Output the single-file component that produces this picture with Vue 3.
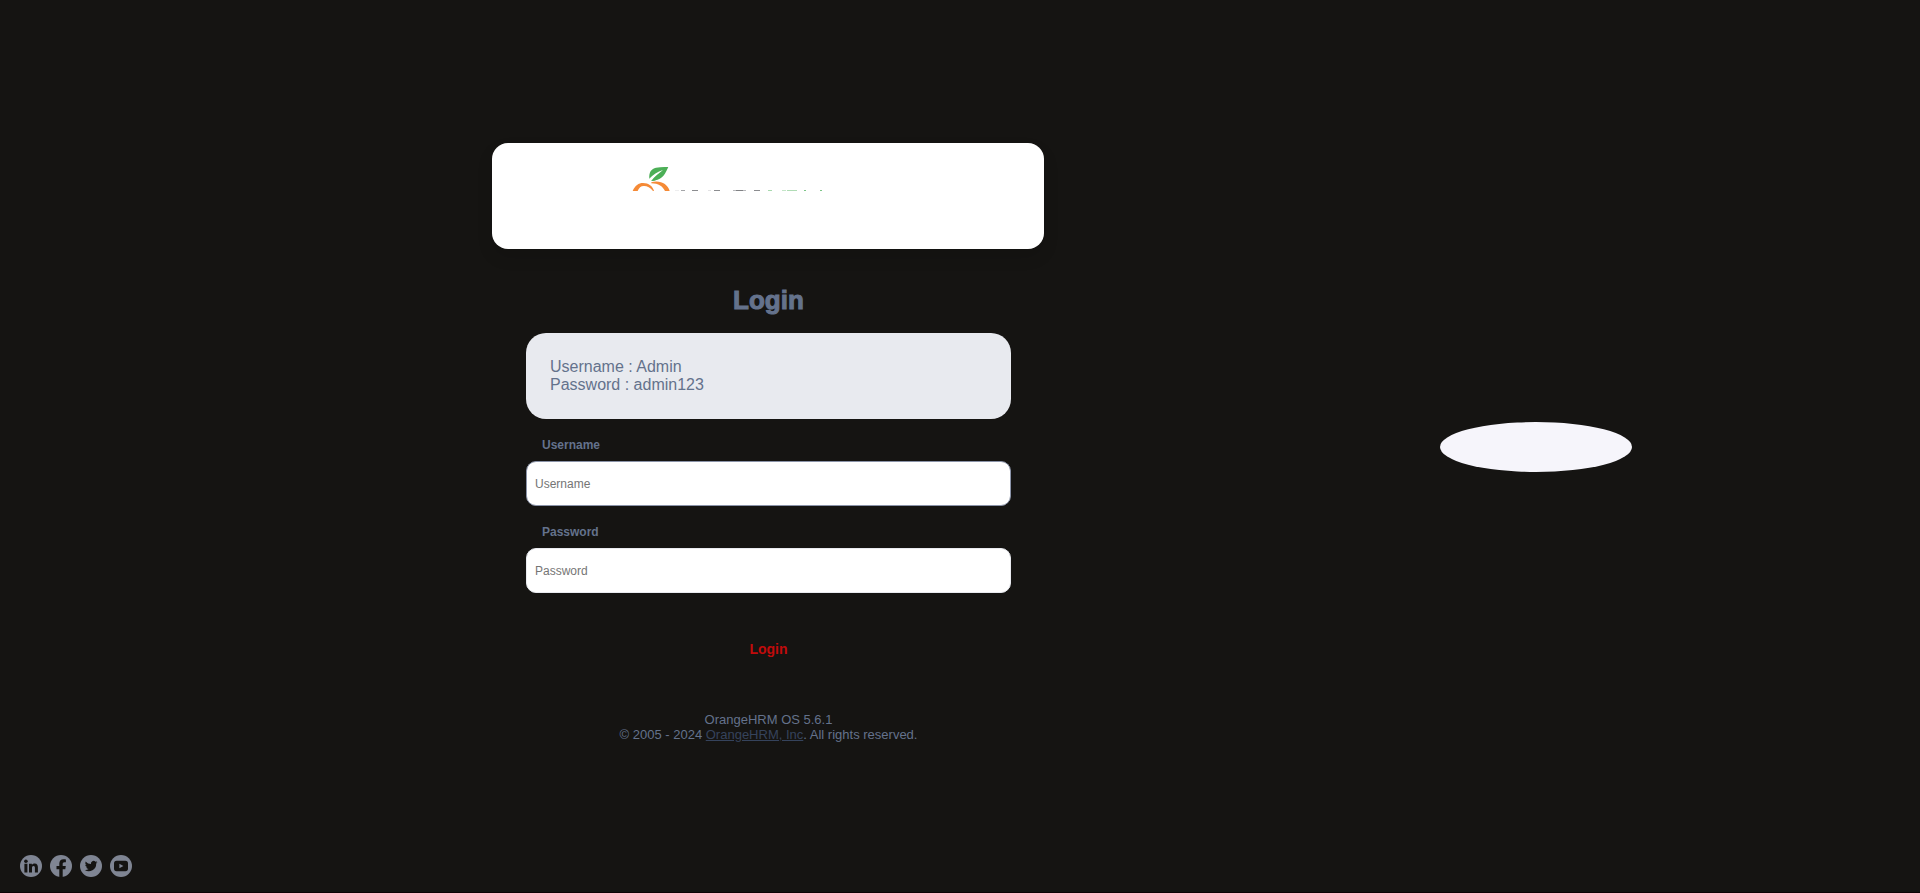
<script setup>
import { ref } from 'vue'

const username = ref('')
const password = ref('')

const logoTicks = [
  { x: 43, w: 4, fill: '#ededee' },
  { x: 49, w: 4, fill: '#a4a5a8' },
  { x: 60, w: 6, fill: '#8c8d90' },
  { x: 76, w: 3, fill: '#e2e2e4' },
  { x: 82, w: 6, fill: '#8c8d90' },
  { x: 101, w: 3, fill: '#b9babd' },
  { x: 104, w: 7, fill: '#808184' },
  { x: 111, w: 3, fill: '#b9babd' },
  { x: 122, w: 6, fill: '#8c8d90' },
  { x: 136, w: 4, fill: '#a8d9ae' },
  { x: 150, w: 4, fill: '#c5e6c9' },
  { x: 155, w: 10, fill: '#b0dcb5' },
  { x: 172, w: 2, fill: '#7cc587' },
  { x: 188, w: 2, fill: '#7cc587' }
]
</script>

<template>
  <div class="page">
    <main class="login-pane">
      <div class="column">
        <div class="brand">
          <svg class="logo" viewBox="0 0 272 25" role="img" aria-label="OrangeHRM">
            <path d="M17.3 12.5C16.8 6 19.5 2.9 24 1.8 28 .9 32 1.1 36.3 1.1 35.2 3.4 34.4 5.3 33.2 7.3 29.8 13.2 25.5 14 19.2 15.1Z" fill="#4caf57" />
            <path d="M17 13C21 8.5 25.5 6 31 4 26.8 7.3 23 10 19 15.3L16.5 15Z" fill="#fff" />
            <path d="M19.4 15C22.5 11.5 24.5 9.5 27.5 7.5L29 11 23 14.6Z" fill="#4caf57" />
            <path d="M.7 25C3 19.4 6.6 17 11 17 16.6 17 20.8 20.2 22 25H21C18.3 21.4 15 19.8 11.8 19.9 8.8 20 7 21.6 5.6 25Z" fill="#f58a36" />
            <path d="M19.3 16.2C28.5 14 35.5 17.8 37.7 25H33C31 20.5 26.5 17.2 19.3 17.2Z" fill="#f58a36" />
            <rect v-for="t in logoTicks" :key="t.x" :x="t.x" y="24" :width="t.w" height="1" :fill="t.fill" />
          </svg>
        </div>

        <div class="body">
          <h1>Login</h1>

          <div class="hint">
            <p>Username : Admin</p>
            <p>Password : admin123</p>
          </div>

          <form @submit.prevent>
            <label for="username">Username</label>
            <input id="username" v-model="username" class="active" type="text" placeholder="Username" />
            <label for="password">Password</label>
            <input id="password" v-model="password" type="password" placeholder="Password" />
            <button type="submit">Login</button>
          </form>

          <footer>
            <p>OrangeHRM OS 5.6.1</p>
            <p>© 2005 - 2024 <a href="#">OrangeHRM, Inc</a>. All rights reserved.</p>
          </footer>
        </div>
      </div>
    </main>

    <div class="blob"></div>

    <nav class="social" aria-label="Social media">
      <a href="#" aria-label="LinkedIn">
        <svg viewBox="0 0 22 22">
          <circle cx="11" cy="11" r="11" fill="#7f8593" />
          <g fill="#151412">
            <circle cx="5.9" cy="6.2" r="1.8" />
            <path d="M4.4 8.8h3v8.6h-3zM9 8.8h2.9V10c.5-.8 1.5-1.4 2.7-1.4 2.7 0 3.3 1.8 3.3 4v4.8h-3v-4.2c0-1 0-2.1-1.4-2.1S12 12.2 12 13.2v4.2H9z" />
          </g>
        </svg>
      </a>
      <a href="#" aria-label="Facebook">
        <svg viewBox="0 0 22 22">
          <circle cx="11" cy="11" r="11" fill="#7f8593" />
          <path d="M9.3 22v-7.8H6.5V11h2.8V8.6c0-2.8 1.7-4.3 4.2-4.3 1.2 0 2.4.2 2.4.2v2.7h-1.4c-1.4 0-1.8.8-1.8 1.7V11h3.1l-.5 3.2h-2.6V22z" fill="#151412" />
        </svg>
      </a>
      <a href="#" aria-label="Twitter">
        <svg viewBox="0 0 22 22">
          <circle cx="11" cy="11" r="11" fill="#7f8593" />
          <path transform="translate(4.8 4.7) scale(.53)" d="M23.9 4.6a10 10 0 0 1-2.8.8 5 5 0 0 0 2.2-2.8c-1 .6-2 1-3.2 1.2a4.9 4.9 0 0 0-8.4 4.5A14 14 0 0 1 1.6 3.2a4.9 4.9 0 0 0 1.6 6.5 5 5 0 0 1-2.3-.6c0 2.3 1.6 4.4 4 4.9a5 5 0 0 1-2.3.1 4.9 4.9 0 0 0 4.6 3.4A9.9 9.9 0 0 1 0 19.5 14 14 0 0 0 21.5 7.1a10 10 0 0 0 2.4-2.5z" fill="#151412" />
        </svg>
      </a>
      <a href="#" aria-label="YouTube">
        <svg viewBox="0 0 22 22">
          <circle cx="11" cy="11" r="11" fill="#7f8593" />
          <rect x="4" y="5.8" width="14" height="10.4" rx="2.6" fill="#151412" />
          <path d="M9.4 8.7v4.6l4-2.3z" fill="#7f8593" />
        </svg>
      </a>
    </nav>
  </div>
</template>

<style>
body {
  background: #151412;
}
</style>

<style scoped>
.page {
  position: relative;
  min-height: 100vh;
  box-sizing: border-box;
  display: flex;
  background: #151412;
  box-shadow: inset 0 -1px #0e0306;
  color: #64728c;
  font-family: "Liberation Sans", Arial, sans-serif;
}

.login-pane {
  width: 80%;
  display: flex;
  flex-direction: column;
  align-items: center;
  justify-content: center;
}

.column {
  width: 100%;
  max-width: 552px;
  padding-bottom: 8px;
}

.brand {
  box-sizing: border-box;
  min-height: 106px;
  padding: 23px 140px;
  border-radius: 16px;
  background: #fff;
  box-shadow: 0 8px 16px rgba(0, 0, 0, 0.12);
}

.logo {
  display: block;
  width: 100%;
}

.body {
  padding: 35px 33px 0 34px;
  text-align: center;
}

h1 {
  margin: 0;
  font-size: 26px;
  font-weight: 900;
  line-height: 32px;
  -webkit-text-stroke: 1px currentColor;
}

.hint {
  margin-top: 17px;
  padding: 25px 24px;
  border-radius: 20px;
  background: #e8eaef;
  font-size: 16px;
  line-height: 18px;
  text-align: left;
}

p {
  margin: 0;
}

form {
  display: flex;
  flex-direction: column;
}

label {
  margin-top: 18px;
  padding: 0 16px;
  font-size: 12px;
  font-weight: 700;
  line-height: 16px;
  text-align: left;
}

input {
  box-sizing: border-box;
  width: 100%;
  height: 45px;
  margin: 8px 0 0;
  padding: 0 8px;
  border: 1px solid #e8eaef;
  border-radius: 10px;
  background: #fff;
  color: #64728c;
  font-family: inherit;
  font-size: 12px;
}

input.active {
  border-color: #8a93a8;
}

input::placeholder {
  color: #757575;
}

button {
  height: 40px;
  margin: 36px 0 0;
  padding: 0;
  border: 0;
  background: transparent;
  color: #c10b0b;
  font-family: inherit;
  font-size: 14px;
  font-weight: 700;
}

footer {
  padding: 43px 0 0;
  font-size: 13px;
  line-height: 15px;
}

footer a {
  color: #35435c;
}

.blob {
  position: absolute;
  top: 50%;
  left: 80%;
  width: 10%;
  height: 50px;
  border-radius: 50%;
  background: #f6f5fb;
  transform: translate(-50%, -50%);
}

.social {
  position: absolute;
  left: 20px;
  bottom: 16px;
  display: flex;
  gap: 8px;
}

.social a,
.social svg {
  display: block;
  width: 22px;
  height: 22px;
}
</style>
